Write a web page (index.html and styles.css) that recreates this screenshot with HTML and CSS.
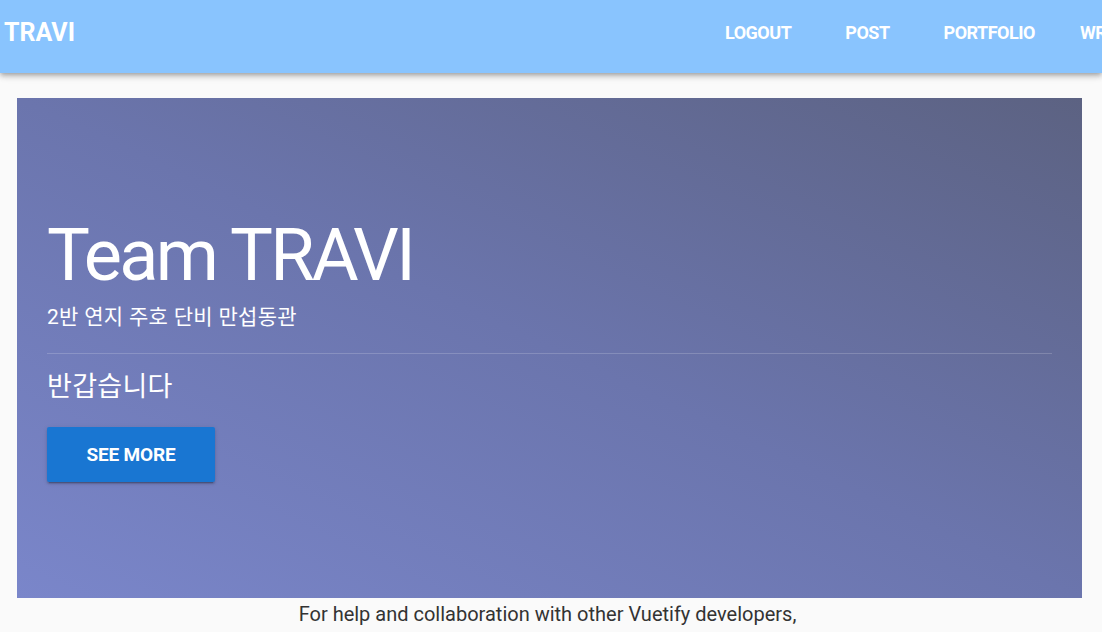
FILE: index.html
```html
<!DOCTYPE html>
<html lang="ko">
<head>
<meta charset="utf-8">
<title>TRAVI</title>
<link rel="stylesheet" href="styles.css">
</head>
<body>
<header class="toolbar">
  <div class="brand">TRAVI</div>
  <nav class="nav">
    <a class="nav-btn" href="#">LOGOUT</a>
    <a class="nav-btn" href="#">POST</a>
    <a class="nav-btn" href="#">PORTFOLIO</a>
    <a class="nav-btn nav-btn-tight" href="#">WRITE</a>
  </nav>
</header>
<main class="content">
  <section class="hero">
    <div class="hero-inner">
      <h1 class="hero-title">Team TRAVI</h1>
      <p class="hero-sub">2반 연지 주호 단비 만섭동관</p>
      <hr class="hero-divider">
      <p class="hero-greet">반갑습니다</p>
      <a class="hero-btn" href="#">SEE MORE</a>
    </div>
  </section>
  <p class="note">For help and collaboration with other Vuetify developers,</p>
</main>
</body>
</html>
```
FILE: styles.css
```css
html, body {
  margin: 0;
  padding: 0;
}
body {
  background: #fafafa;
  font-family: Roboto, "Noto Sans CJK KR", sans-serif;
  color: #333;
  overflow: hidden;
  height: 632px;
}
.toolbar {
  height: 73px;
  box-sizing: border-box;
  padding-bottom: 9px;
  background: #89c4fe;
  display: flex;
  align-items: center;
  overflow: hidden;
  box-shadow: 0 2px 4px -1px rgba(0,0,0,.2), 0 4px 5px 0 rgba(0,0,0,.14), 0 1px 10px 0 rgba(0,0,0,.12);
  position: relative;
  z-index: 2;
}
.brand {
  flex: none;
  padding-left: 4px;
  font-size: 25px;
  font-weight: 700;
  color: #fff;
  width: 70px;
}
.nav {
  flex: none;
  display: flex;
  gap: 54px;
  margin-left: 651px;
}
.nav-btn {
  color: #fff;
  text-decoration: none;
  font-weight: 700;
  font-size: 18px;
  letter-spacing: -0.5px;
  white-space: nowrap;
}
.nav-btn-tight {
  margin-left: -9px;
}
.content {
  padding: 25px 20px 0 17px;
}
.hero {
  height: 500px;
  box-sizing: border-box;
  padding: 2px 30px 0;
  background: linear-gradient(to top right, #7a86ca 0%, #6b75ad 50%, #5c6282 100%);
  display: flex;
  flex-direction: column;
  justify-content: center;
  color: #fff;
}
.hero-inner {
  display: flex;
  flex-direction: column;
}
.hero-title {
  margin: 0;
  font-size: 72px;
  font-weight: 400;
  line-height: 80px;
  letter-spacing: -2.7px;
}
.hero-sub {
  margin: 6px 0 0;
  font-size: 21px;
  line-height: 30px;
  letter-spacing: 0.3px;
}
.hero-divider {
  width: 100%;
  border: 0;
  border-top: 1px solid rgba(255,255,255,.18);
  margin: 21px 0 16px;
}
.hero-greet {
  margin: 0;
  font-size: 27px;
  line-height: 34px;
  letter-spacing: 0.3px;
}
.hero-btn {
  align-self: flex-start;
  margin-top: 23px;
  width: 168px;
  height: 55px;
  display: flex;
  align-items: center;
  justify-content: center;
  background: #1976d2;
  color: #fff;
  text-decoration: none;
  font-weight: 700;
  font-size: 19px;
  letter-spacing: -0.2px;
  border-radius: 2px;
  box-shadow: 0 3px 1px -2px rgba(0,0,0,.2), 0 2px 2px 0 rgba(0,0,0,.14), 0 1px 5px 0 rgba(0,0,0,.12);
}
.note {
  margin: 4px 0 0;
  padding-right: 4px;
  text-align: center;
  font-size: 20px;
  line-height: 24px;
  color: #333;
}
```
